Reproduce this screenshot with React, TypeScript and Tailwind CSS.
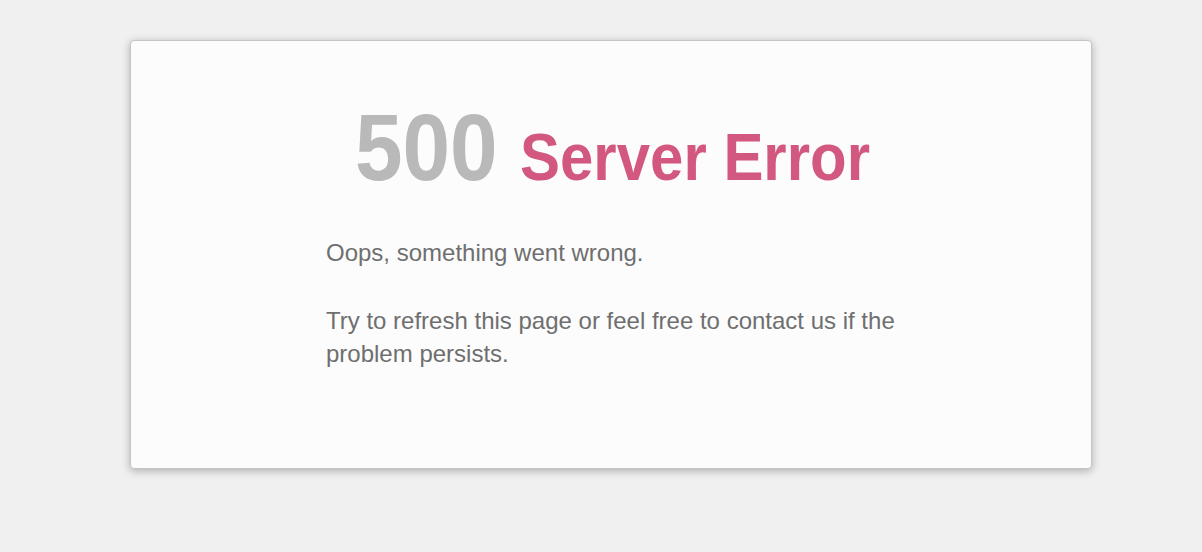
const App = () => {
	return (
		<main className="min-h-[552px] w-full bg-[#f0f0f0] pt-[40px] font-['Liberation_Sans',Arial,sans-serif]">
			<div className="ml-[130px] h-[429px] w-[962px] rounded-[4px] border border-[#c4c4c4] bg-[#fcfcfc] pt-[59px] shadow-[0_2px_8px_rgba(0,0,0,0.28)]">
				{/* glyphs are a touch condensed in the original, hence scale-x with fixed box widths */}
				<h1 className="flex items-baseline justify-center gap-[22px] pl-[2px] font-bold leading-none">
					<span className="inline-block w-[143px] origin-left scale-x-[0.9] whitespace-nowrap text-[95px] text-[#b9b9b9]">500</span>
					<span className="inline-block w-[350px] origin-left scale-x-[0.895] whitespace-nowrap text-[67px] text-[#d2587f]">Server Error</span>
				</h1>

				<div className="mt-[41px] w-[600px] pl-[195px] text-[24px] leading-[33px] text-[#6f6f6f]">
					<p className="w-[580px]">Oops, something went wrong.</p>
					<p className="mt-[35px] w-[580px]">
						Try to refresh this page or feel free to contact us if the problem persists.
					</p>
				</div>
			</div>
		</main>
	)
}

export default App
